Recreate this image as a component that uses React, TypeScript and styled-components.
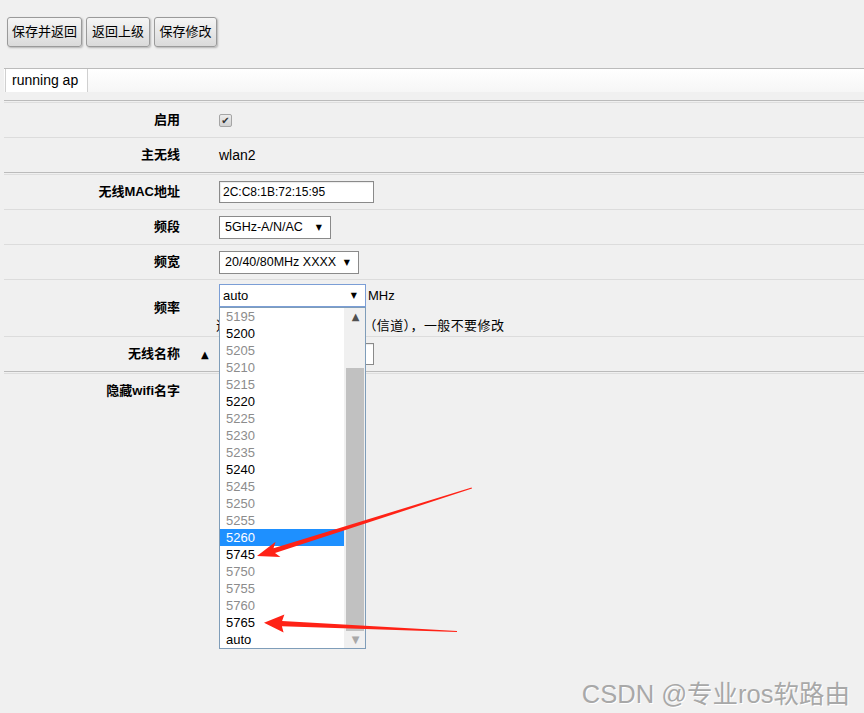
import React from "react";
import styled, { createGlobalStyle } from "styled-components";

const GlobalStyle = createGlobalStyle`
  body {
    margin: 0;
    background: #f0f0f0;
    font-family: "Liberation Sans", "Noto Sans CJK SC", sans-serif;
    font-size: 13px;
    color: #000;
  }
`;

const Page = styled.div`
  position: relative;
  height: 713px;
  overflow: hidden;
  padding-top: 17px;
  box-sizing: border-box;
`;

const Toolbar = styled.div`
  display: flex;
  gap: 4px;
  padding-left: 7px;
`;

const Button = styled.button<{ $w: number }>`
  width: ${(p) => p.$w}px;
  height: 30px;
  padding: 0;
  border: 1px solid #9a9a9a;
  border-radius: 3px;
  background: linear-gradient(#f5f5f5, #dadada);
  box-shadow: 1px 1px 2px rgba(0, 0, 0, 0.25);
  font-family: inherit;
  font-size: 13px;
  line-height: 26px;
  color: #000;
`;

const TabBar = styled.div`
  display: flex;
  height: 23px;
  margin: 21px 0 0 4px;
  border-top: 1px solid #bbb;
  background: linear-gradient(#fff, #f6f6f6);
`;

const Tab = styled.div`
  padding: 0 9px 0 6px;
  margin-left: 1px;
  line-height: 23px;
  font-size: 14px;
  background: #fff;
  border-left: 1px solid #d0d0d0;
  border-right: 1px solid #d0d0d0;
`;

const Form = styled.div`
  margin: 8px 0 0 4px;
`;

const Group = styled.div`
  border-top: 1px solid #bbb;
  padding-top: 1px;
`;

const GroupInner = styled.div`
  border-top: 1px solid #dedede;
`;

const Row = styled.div`
  display: grid;
  grid-template-columns: 176px 39px 1fr;
  align-items: center;
  min-height: 34px;
  border-bottom: 1px solid #dcdcdc;
  &:last-child {
    border-bottom: none;
  }
`;

const Label = styled.div`
  text-align: right;
  font-weight: bold;
  line-height: 16px;
`;

const Toggle = styled.div`
  padding-left: 21px;
  font-size: 10px;
  font-family: "DejaVu Sans", sans-serif;
`;

const Value = styled.div`
  display: flex;
  flex-direction: column;
  align-items: flex-start;
`;

const FreqValue = styled(Value)`
  padding: 4px 0 2px;
`;

const Line = styled.div`
  display: flex;
  align-items: center;
  gap: 2px;
`;

const Text = styled.span`
  font-size: 14px;
  line-height: 16px;
`;

const Helper = styled.div`
  margin: 10px 0 0 -3px;
  line-height: 17px;
  font-size: 13px;
  letter-spacing: 0.4px;
`;

const Check = styled.span`
  display: inline-flex;
  align-items: center;
  justify-content: center;
  width: 13px;
  height: 13px;
  box-sizing: border-box;
  border: 1px solid #a5a5a5;
  border-radius: 2px;
  background: linear-gradient(#ececec, #d2d2d2);
  color: #333;
  font-size: 10px;
  font-family: "DejaVu Sans", sans-serif;
`;

const Input = styled.div<{ $w: number }>`
  width: ${(p) => p.$w}px;
  height: 22px;
  box-sizing: border-box;
  border: 1px solid #8a8a8a;
  box-shadow: inset 1px 1px 1px rgba(0, 0, 0, 0.08);
  background: #fff;
  padding-left: 3px;
  display: flex;
  align-items: center;
  font-size: 12px;
`;

const SelectWrap = styled.div`
  position: relative;
`;

const Select = styled.div<{ $w: number; $focus?: boolean }>`
  width: ${(p) => p.$w}px;
  height: 23px;
  box-sizing: border-box;
  border: 1px solid ${(p) => (p.$focus ? "#7b9ed6" : "#8a8a8a")};
  background: #fff;
  display: flex;
  align-items: center;
  justify-content: space-between;
  padding: 0 8px 0 ${(p) => (p.$focus ? 3 : 5)}px;
  font-size: ${(p) => (p.$focus ? 13 : 12.5)}px;
`;

const Caret = styled.span`
  font-size: 8px;
  font-family: "DejaVu Sans", sans-serif;
`;

const DropList = styled.div`
  position: absolute;
  top: 100%;
  left: 0;
  z-index: 10;
  width: 147px;
  box-sizing: border-box;
  border: 1px solid #7f9db9;
  background: #fff;
  display: flex;
`;

const Options = styled.div`
  width: 124px;
`;

const Option = styled.div<{ $on?: boolean; $sel?: boolean }>`
  height: 17px;
  line-height: 17px;
  padding-left: 6px;
  font-size: 13px;
  color: ${(p) => (p.$sel ? "#fff" : p.$on ? "#000" : "#8c8c8c")};
  background: ${(p) => (p.$sel ? "#1e90ff" : "transparent")};
`;

const Scrollbar = styled.div`
  width: 21px;
  background: #f0f0f0;
  display: flex;
  flex-direction: column;
`;

const ScrollBtn = styled.div<{ $off?: boolean }>`
  height: 17px;
  display: flex;
  align-items: center;
  justify-content: center;
  padding-left: 2px;
  font-size: 10px;
  font-family: "DejaVu Sans", sans-serif;
  color: ${(p) => (p.$off ? "#a8a8a8" : "#505050")};
`;

const Track = styled.div`
  flex: 1;
  display: flex;
  flex-direction: column;
  justify-content: flex-end;
`;

const Thumb = styled.div`
  height: 263px;
  margin: 0 1px 0 2px;
  background: #c1c1c1;
`;

const Overlay = styled.svg`
  position: absolute;
  top: 0;
  left: 0;
  z-index: 20;
  pointer-events: none;
`;

const Watermark = styled.div`
  position: absolute;
  right: 14px;
  bottom: 3px;
  font-size: 25.5px;
  color: #a8a8a8;
  text-shadow: 1px 1px 0 #fff;
`;

const freqs: [string, boolean][] = [
  ["5195", false],
  ["5200", true],
  ["5205", false],
  ["5210", false],
  ["5215", false],
  ["5220", true],
  ["5225", false],
  ["5230", false],
  ["5235", false],
  ["5240", true],
  ["5245", false],
  ["5250", false],
  ["5255", false],
  ["5260", true],
  ["5745", true],
  ["5750", false],
  ["5755", false],
  ["5760", false],
  ["5765", true],
  ["auto", true],
];

export default function App() {
  return (
    <Page>
      <GlobalStyle />
      <Toolbar>
        <Button $w={75}>保存并返回</Button>
        <Button $w={64}>返回上级</Button>
        <Button $w={63}>保存修改</Button>
      </Toolbar>

      <TabBar>
        <Tab>running ap</Tab>
      </TabBar>

      <Form>
        <Group>
          <GroupInner>
            <Row>
              <Label>启用</Label>
              <span />
              <Value>
                <Check>✔</Check>
              </Value>
            </Row>
            <Row>
              <Label>主无线</Label>
              <span />
              <Value>
                <Text>wlan2</Text>
              </Value>
            </Row>
          </GroupInner>
        </Group>

        <Group>
          <GroupInner>
            <Row>
              <Label>无线MAC地址</Label>
              <span />
              <Value>
                <Input $w={155}>2C:C8:1B:72:15:95</Input>
              </Value>
            </Row>
            <Row>
              <Label>频段</Label>
              <span />
              <Value>
                <Select $w={112}>
                  5GHz-A/N/AC <Caret>▼</Caret>
                </Select>
              </Value>
            </Row>
            <Row>
              <Label>频宽</Label>
              <span />
              <Value>
                <Select $w={140}>
                  20/40/80MHz XXXX <Caret>▼</Caret>
                </Select>
              </Value>
            </Row>
            <Row>
              <Label>频率</Label>
              <span />
              <FreqValue>
                <Line>
                  <SelectWrap>
                    <Select $w={147} $focus>
                      auto <Caret>▼</Caret>
                    </Select>
                    <DropList>
                      <Options>
                        {freqs.map(([v, on]) => (
                          <Option key={v} $on={on} $sel={v === "5260"}>
                            {v}
                          </Option>
                        ))}
                      </Options>
                      <Scrollbar>
                        <ScrollBtn>▲</ScrollBtn>
                        <Track>
                          <Thumb />
                        </Track>
                        <ScrollBtn $off>▼</ScrollBtn>
                      </Scrollbar>
                    </DropList>
                  </SelectWrap>
                  <span>MHz</span>
                </Line>
                <Helper>选择无线网卡的工作频率（信道），一般不要修改</Helper>
              </FreqValue>
            </Row>
            <Row>
              <Label>无线名称</Label>
              <Toggle>▲</Toggle>
              <Value>
                <Input $w={155}>running ap</Input>
              </Value>
            </Row>
          </GroupInner>
        </Group>

        <Group>
          <GroupInner>
            <Row>
              <Label>隐藏wifi名字</Label>
              <span />
              <Value>
                <Check />
              </Value>
            </Row>
          </GroupInner>
        </Group>
      </Form>

      <Overlay width={864} height={713} viewBox="0 0 864 713">
        <polygon
          fill="#ff2216"
          points="257,556 280.4,557 275,553 472,488.6 471.6,487.6 273.5,548.2 275.6,541.8"
        />
        <polygon
          fill="#ff2216"
          points="264,622.7 283.6,632.6 281.9,626.2 457,632 457,631 282.1,621 284.4,614.6"
        />
      </Overlay>

      <Watermark>CSDN @专业ros软路由</Watermark>
    </Page>
  );
}
